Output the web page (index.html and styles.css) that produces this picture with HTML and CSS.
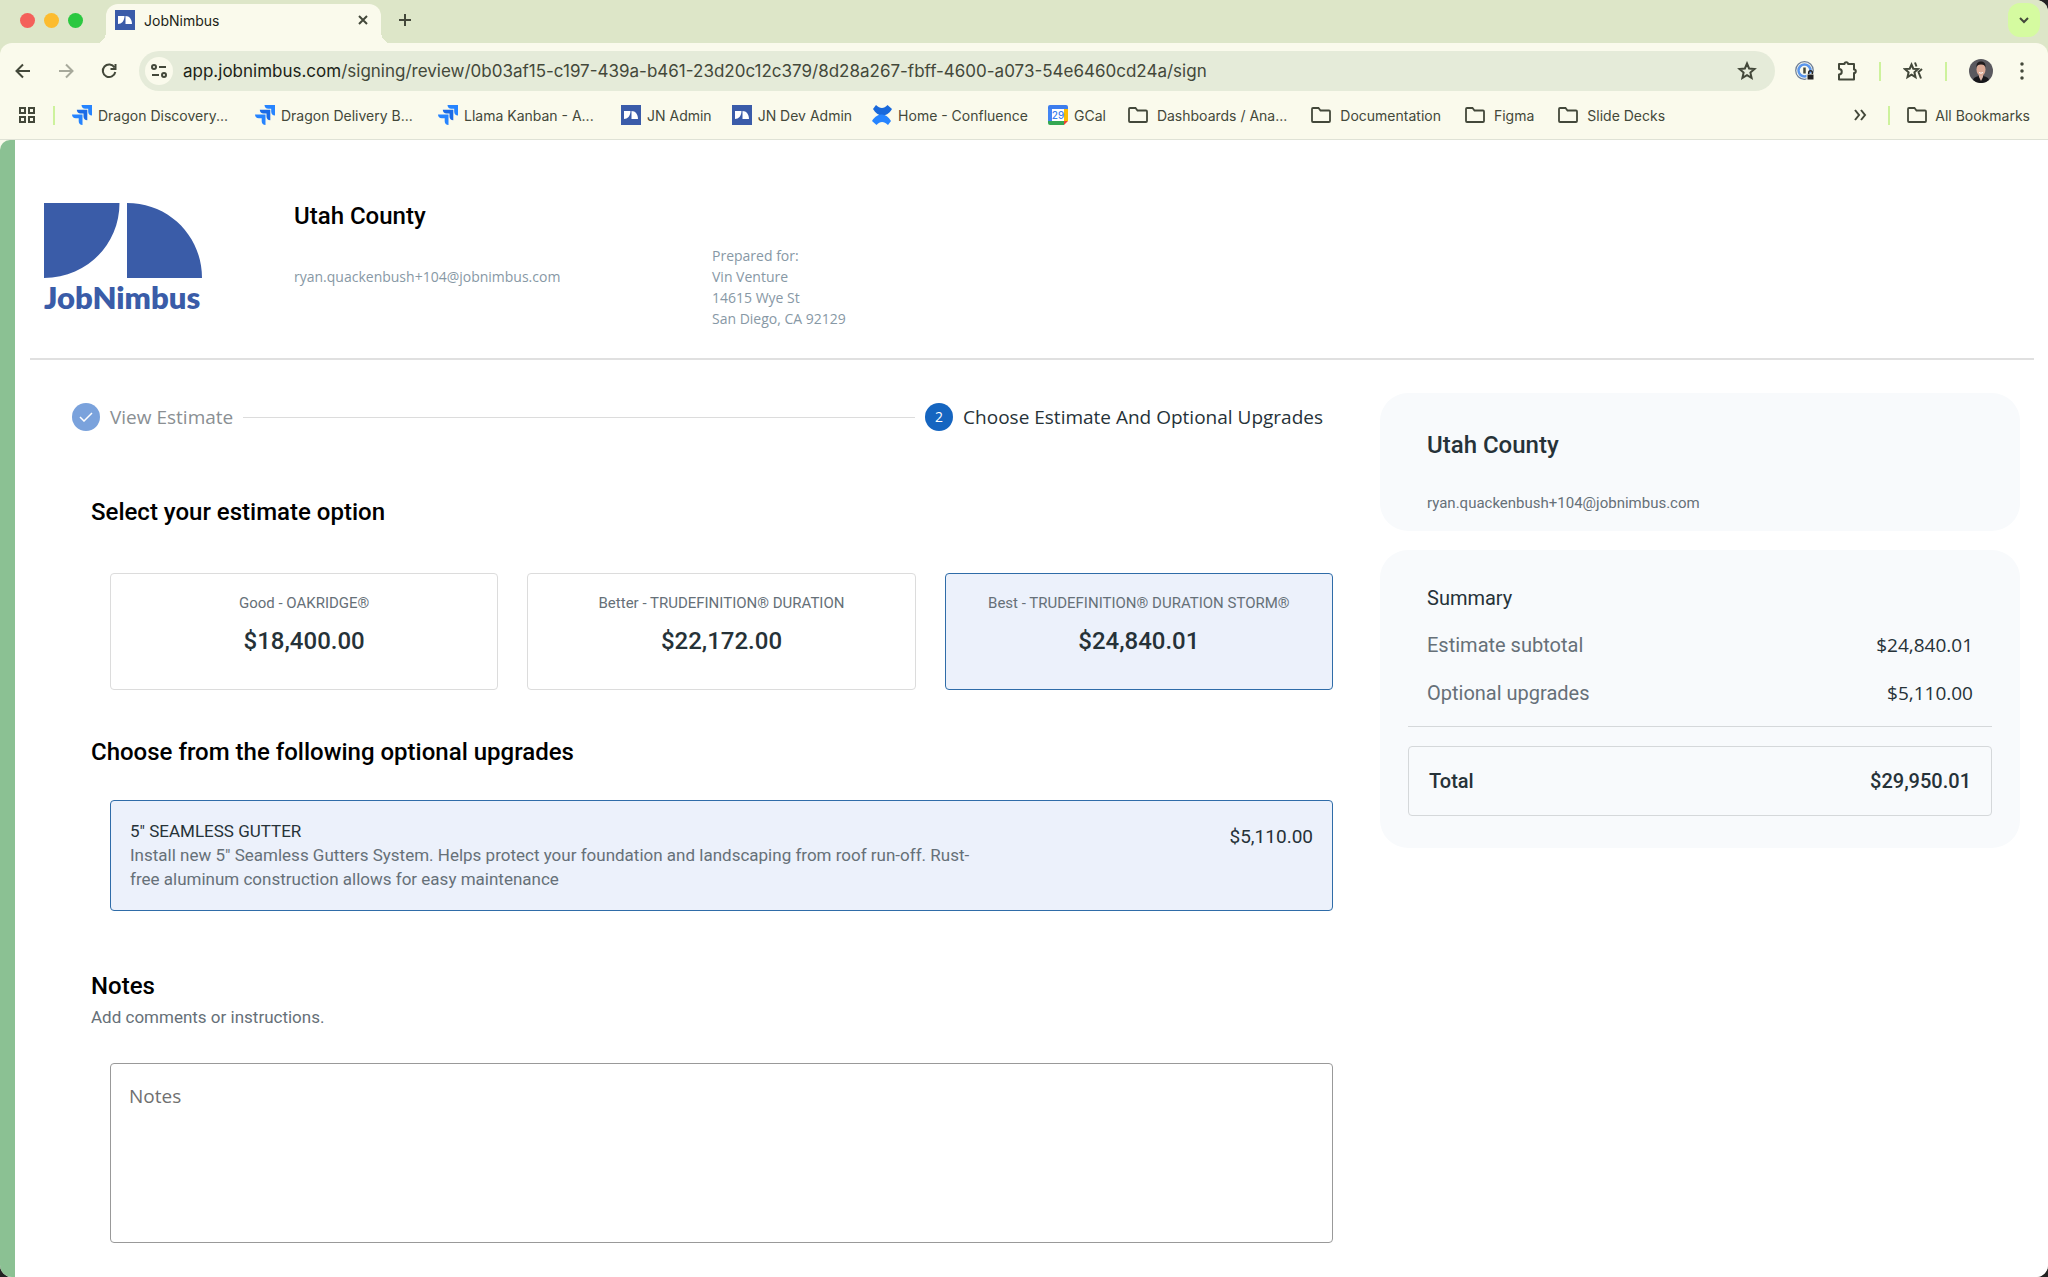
FILE: index.html
```html
<!DOCTYPE html>
<html lang="en">

<head>
    <meta charset="UTF-8">
    <title>JobNimbus</title>
    <link rel="stylesheet" href="styles.css">
</head>

<body>
    <!-- shared icons -->
    <svg class="sprite" aria-hidden="true">
        <symbol id="jn" viewBox="0 0 20 20">
            <rect width="20" height="20" fill="#3a5ba9" />
            <path d="M3 6h6.500c0 5-3 8-6.500 8zM10.500 6c4 0 6.500 3.500 6.500 8h-6.500z" fill="#fff" />
        </symbol>
        <symbol id="jira" viewBox="0 0 20 20">
            <path d="M9.500 0H20v10.500c-2.300 0-3.800-1.500-3.800-3.800V3.800h-2.900C11 3.800 9.500 2.300 9.500 0z" fill="#2684ff" />
            <path d="M4.800 4.700h10.500v10.500c-2.300 0-3.800-1.500-3.800-3.800V8.500H8.600c-2.300 0-3.800-1.500-3.800-3.800z" fill="#1b6be6" />
            <path d="M0 9.500h10.500V20c-2.300 0-3.800-1.500-3.800-3.800v-2.900H3.800C1.500 13.300 0 11.800 0 9.500z" fill="#2684ff" />
        </symbol>
        <symbol id="folder" viewBox="0 0 20 20">
            <path d="M2 3h5.500l2 2.500H18a1 1 0 0 1 1 1V16a1 1 0 0 1-1 1H2a1 1 0 0 1-1-1V4a1 1 0 0 1 1-1z" fill="none" stroke="#43483a" stroke-width="1.800" />
        </symbol>
    </svg>

    <div class="window">
        <header class="browser">
            <div class="tab-strip">
                <div class="lights"><i class="red"></i><i class="yellow"></i><i class="green"></i></div>
                <div class="tab">
                    <svg class="icon"><use href="#jn" /></svg>
                    <span>JobNimbus</span>
                    <button class="tab-close" aria-label="Close tab"><svg width="10" height="10" viewBox="0 0 10 10"><path d="M1 1l8 8M9 1l-8 8" /></svg></button>
                </div>
                <button class="new-tab" aria-label="New tab"><svg width="14" height="14" viewBox="0 0 14 14"><path d="M7 1v12M1 7h12" /></svg></button>
                <button class="tab-search" aria-label="Search tabs"><svg width="12" height="8" viewBox="0 0 12 8"><path d="M2 2l4 4 4-4" /></svg></button>
            </div>

            <div class="toolbar">
                <div class="nav">
                    <button aria-label="Back"><svg width="16" height="16" viewBox="0 0 16 16"><path d="M15 8H2M8 1.500L1.500 8 8 14.500" /></svg></button>
                    <button class="off" aria-label="Forward"><svg width="16" height="16" viewBox="0 0 16 16"><path d="M1 8h13M8 1.500L14.500 8 8 14.500" /></svg></button>
                    <button aria-label="Reload"><svg width="16" height="16" viewBox="0 0 16 16"><path d="M13.500 4.500A6.300 6.300 0 1 0 14.300 9M14.500 1v5h-5" /></svg></button>
                </div>
                <div class="omnibox">
                    <button class="site-info" aria-label="Site information"><svg width="16" height="14" viewBox="0 0 16 14"><circle cx="3" cy="3" r="2" /><path d="M8 3h7M1 11h7" /><circle cx="13" cy="11" r="2" /></svg></button>
                    <span class="url">app.jobnimbus.com<span>/signing/review/0b03af15-c197-439a-b461-23d20c12c379/8d28a267-fbff-4600-a073-54e6460cd24a/sign</span></span>
                    <button aria-label="Bookmark"><svg width="20" height="20" viewBox="0 0 20 20"><path d="M10 2.500l2.100 5 5.400.5-4.100 3.600 1.200 5.300-4.600-2.800-4.600 2.800 1.200-5.300L2.500 8l5.400-.5z" /></svg></button>
                </div>
                <div class="tools">
                    <button aria-label="Password manager"><svg width="20" height="20" viewBox="0 0 20 20"><circle cx="9.500" cy="9.500" r="8.800" stroke="#6d7d95" stroke-width="1.200" /><circle cx="9.500" cy="9.500" r="6" stroke="#5a96ec" stroke-width="2.500" /><path d="M9.500 6.500v6" stroke-width="2.500" /><path d="M12 13h7v6h-7z" fill="#222" stroke="#fafaec" stroke-width="1" /><path d="M13.700 13v-1.500a1.800 1.800 0 0 1 3.600 0V13" stroke="#222" stroke-width="1.500" /></svg></button>
                    <button aria-label="Extensions"><svg width="20" height="20" viewBox="0 0 20 20"><path d="M2 3h5.500a1.800 1.800 0 0 1 3.600 0H17v5.500a1.800 1.800 0 0 1 0 3.600V18.500H2V13.500a2.700 2.700 0 0 0 0-5.500z" stroke-linejoin="round" /></svg></button>
                    <i class="sep"></i>
                    <button aria-label="Labs"><svg width="20" height="20" viewBox="0 0 20 20"><path d="M8.500 3.500l1.800 4.200 4.700.4-3.600 3.200 1.100 4.800-4-2.500-4 2.500 1.100-4.800L2 8.100l4.700-.4zM12 1.500l1.500 4M19 8l-3.500 3 2.500 6.500" /></svg></button>
                    <i class="sep"></i>
                    <button aria-label="Profile"><svg width="24" height="24" viewBox="0 0 24 24"><circle cx="12" cy="12" r="12" fill="#5a595f" stroke="none" /><path d="M4 21c1-3 4-4 8-4s7 1 8 4a12 12 0 0 1-16 0z" fill="#17171b" stroke="none" /><path d="M10 15h4v3l-2 4-2-4z" fill="#d9b3a5" stroke="none" /><ellipse cx="12" cy="10.500" rx="4.500" ry="6.500" fill="#dba995" stroke="none" /><path d="M7.500 8.500C7 4 9.500 2.500 12 2.500s5 1.500 4.500 6C16 6.500 15 5.500 12 5.500s-4 1-4.500 3z" fill="#201b1d" stroke="none" /><path d="M10 13.500q2 1.500 4 0" stroke="#fff" stroke-width="1" /></svg></button>
                    <button class="menu" aria-label="Menu"><svg width="6" height="18" viewBox="0 0 6 18"><path d="M3 2v.1M3 9v.1M3 16v.1" stroke-width="3.500" stroke-linecap="round" /></svg></button>
                </div>
            </div>

            <nav class="bookmarks">
                <a href="#" aria-label="Apps"><svg width="18" height="18" viewBox="0 0 18 18" fill="none" stroke="#43483a" stroke-width="2"><path d="M2 2h5v5H2zM11 2h5v5h-5zM2 11h5v5H2zM11 11h5v5h-5z" /></svg></a>
                <i class="sep"></i>
                <a href="#" class="cut"><svg class="icon"><use href="#jira" /></svg>Dragon Discovery...</a>
                <a href="#" class="cut"><svg class="icon"><use href="#jira" /></svg>Dragon Delivery B...</a>
                <a href="#" class="cut"><svg class="icon"><use href="#jira" /></svg>Llama Kanban - A...</a>
                <a href="#"><svg class="icon"><use href="#jn" /></svg>JN Admin</a>
                <a href="#"><svg class="icon"><use href="#jn" /></svg>JN Dev Admin</a>
                <a href="#"><svg class="icon" viewBox="0 0 20 20"><path d="M1 4l3-4c4 4 8 4 11.500 0L20 4c-3 5-6.500 6.500-10 6.500S3.500 8 1 4z" fill="#1868db" /><path d="M19 16l-3 4c-4-4-8-4-11.500 0L0 16c3-5 6.500-6.500 10-6.500s6.500 2.500 9 6.500z" fill="#2684ff" /></svg>Home - Confluence</a>
                <a href="#"><svg class="icon" viewBox="0 0 20 20"><path d="M0 2a2 2 0 0 1 2-2h16a2 2 0 0 1 2 2v2H0z" fill="#3c7ded" /><path d="M0 4h4v12H0z" fill="#4285f4" /><path d="M16 4h4v12h-4z" fill="#fbbc04" /><path d="M0 16h16v4H2a2 2 0 0 1-2-2z" fill="#34a853" /><path d="M16 16h4l-4 4z" fill="#ea4335" /><path d="M4 4h12v12H4z" fill="#fff" /><text x="10" y="14" text-anchor="middle" class="cal-day">29</text></svg>GCal</a>
                <a href="#" class="folder cut"><svg class="icon"><use href="#folder" /></svg>Dashboards / Ana...</a>
                <a href="#" class="folder"><svg class="icon"><use href="#folder" /></svg>Documentation</a>
                <a href="#" class="folder"><svg class="icon"><use href="#folder" /></svg>Figma</a>
                <a href="#" class="folder"><svg class="icon"><use href="#folder" /></svg>Slide Decks</a>
                <button class="more" aria-label="More bookmarks"><svg width="14" height="12" viewBox="0 0 14 12"><path d="M2 1l4 5-4 5M8 1l4 5-4 5" /></svg></button>
                <i class="sep"></i>
                <a href="#" class="all"><svg class="icon"><use href="#folder" /></svg>All Bookmarks</a>
            </nav>
        </header>

        <div class="page">
            <section class="company">
                <div class="logo">
                    <svg viewBox="0 0 158 75" aria-hidden="true"><path d="M0 0h75.500C75.500 42 42 75 0 75zM83 0c42 0 75 33 75 75H83z" fill="#3a5ca8" /></svg>
                    <span>JobNimbus</span>
                </div>
                <div class="company-info">
                    <h1>Utah County</h1>
                    <p>ryan.quackenbush+104@jobnimbus.com</p>
                </div>
                <address>
                    Prepared for:<br>
                    Vin Venture<br>
                    14615 Wye St<br>
                    San Diego, CA 92129
                </address>
            </section>

            <div class="columns">
                <main>
                    <ol class="stepper">
                        <li class="done">
                            <span class="dot"><svg width="14" height="10" viewBox="0 0 14 10"><path d="M1 5l4 4 8-8" fill="none" stroke="#fff" stroke-width="1.500" /></svg></span>
                            View Estimate
                        </li>
                        <li class="line"></li>
                        <li><span class="dot">2</span>Choose Estimate And Optional Upgrades</li>
                    </ol>

                    <h2>Select your estimate option</h2>
                    <div class="options">
                        <button class="option"><span>Good - OAKRIDGE®</span><strong>$18,400.00</strong></button>
                        <button class="option"><span>Better - TRUDEFINITION® DURATION</span><strong>$22,172.00</strong></button>
                        <button class="option selected"><span>Best - TRUDEFINITION® DURATION STORM®</span><strong>$24,840.01</strong></button>
                    </div>

                    <h2>Choose from the following optional upgrades</h2>
                    <button class="upgrade selected">
                        <span class="upgrade-text">
                            <span class="upgrade-name">5" SEAMLESS GUTTER</span>
                            <span class="upgrade-desc">Install new 5" Seamless Gutters System. Helps protect your foundation and landscaping from roof run-off. Rust-free aluminum construction allows for easy maintenance</span>
                        </span>
                        <span class="upgrade-price">$5,110.00</span>
                    </button>

                    <h2><label for="notes">Notes</label></h2>
                    <p class="hint">Add comments or instructions.</p>
                    <textarea id="notes" placeholder="Notes"></textarea>
                </main>

                <aside>
                    <section class="card contact">
                        <h2>Utah County</h2>
                        <p>ryan.quackenbush+104@jobnimbus.com</p>
                    </section>
                    <section class="card summary">
                        <h3>Summary</h3>
                        <dl>
                            <div><dt>Estimate subtotal</dt><dd>$24,840.01</dd></div>
                            <div><dt>Optional upgrades</dt><dd>$5,110.00</dd></div>
                            <div class="total"><dt>Total</dt><dd>$29,950.01</dd></div>
                        </dl>
                    </section>
                </aside>
            </div>
        </div>
    </div>
</body>

</html>
```
FILE: styles.css
```css
* {
    box-sizing: border-box;
}

body {
    margin: 0;
    background: #222;
    font-family: Roboto, sans-serif;
    color: #263238;
}

h1,
h2,
h3,
p,
dl,
dd,
ol {
    margin: 0;
    padding: 0;
}

button {
    font: inherit;
    color: inherit;
    background: none;
    border: none;
    padding: 0;
    cursor: pointer;
}

.sprite {
    display: none;
}

.window {
    min-height: 100vh;
    display: flex;
    flex-direction: column;
    border-radius: 0 12px 12px 12px;
    overflow: hidden;
    background: #fafaec;
}

/* browser bars */
.browser {
    font-family: Inter, sans-serif;
    background: #dde6c8;
    border-bottom: 1px solid #dfe2d6;
}

.browser svg {
    display: block;
}

.browser button svg {
    fill: none;
    stroke: #43483a;
    stroke-width: 2;
}

.icon {
    width: 20px;
    height: 20px;
    flex: none;
}

.tab-strip {
    display: flex;
    align-items: center;
    height: 43px;
    padding: 0 8px 3px 20px;
}

.lights {
    display: flex;
    gap: 9px;
    width: 86px;
}

.lights i {
    width: 15px;
    height: 15px;
    border-radius: 50%;
}

.lights .red {
    background: #f4605a;
}

.lights .yellow {
    background: #fcbc2f;
}

.lights .green {
    background: #2bc840;
}

.tab {
    position: relative;
    display: flex;
    align-items: center;
    align-self: flex-end;
    gap: 9px;
    width: 275px;
    height: 40px;
    margin-bottom: -4px;
    padding: 0 13px 8px 9px;
    border-radius: 12px 12px 0 0;
    background: #fafaec;
    font-size: 14px;
    color: #1c1f17;
}

/* curved feet of the active tab */
.tab::before,
.tab::after {
    content: "";
    position: absolute;
    bottom: 0;
    width: 12px;
    height: 12px;
}

.tab::before {
    right: 100%;
    background: radial-gradient(circle at 0 0, transparent 12px, #fafaec 12px);
}

.tab::after {
    left: 100%;
    background: radial-gradient(circle at 100% 0, transparent 12px, #fafaec 12px);
}

.tab-close {
    margin-left: auto;
}

.new-tab {
    margin-left: 17px;
}

.tab-search {
    display: grid;
    place-items: center;
    width: 32px;
    height: 34px;
    margin-left: auto;
    border-radius: 12px;
    background: #d5fba0;
}

.toolbar {
    display: flex;
    align-items: center;
    gap: 20px;
    height: 56px;
    padding: 0 23px 0 15px;
    border-radius: 12px 12px 0 0;
    background: #fafaec;
}

.nav {
    display: flex;
    gap: 27px;
    width: 104px;
}

.nav .off {
    opacity: 0.45;
}

.omnibox {
    display: flex;
    align-items: center;
    flex: 1;
    gap: 10px;
    height: 40px;
    padding: 0 18px 0 6px;
    border-radius: 20px;
    background: #e5ebd9;
}

.site-info {
    display: grid;
    place-items: center;
    width: 28px;
    height: 28px;
    border-radius: 50%;
    background: #fafaec;
}

.url {
    flex: 1;
    font-size: 17px;
    color: #1c1f17;
}

.url span {
    color: #43483a;
}

.tools {
    display: flex;
    align-items: center;
    gap: 22px;
}

.tools .menu {
    margin-left: 4px;
}

.sep {
    width: 2px;
    height: 19px;
    background: #cdf29c;
}

.bookmarks {
    display: flex;
    align-items: center;
    gap: 20px;
    height: 40px;
    padding: 0 18px 8px;
    background: #fafaec;
    font-size: 14px;
}

.bookmarks .sep {
    margin: 0 -3px;
}

.bookmarks a {
    display: flex;
    align-items: center;
    gap: 6px;
    color: #43483a;
    text-decoration: none;
    white-space: nowrap;
}

.bookmarks .cut {
    min-width: 163px;
}

.bookmarks .folder {
    gap: 9px;
    padding: 0 2px;
}

.bookmarks .all {
    gap: 8px;
}

.bookmarks .more {
    margin: 0 4px 0 auto;
}

.cal-day {
    font-size: 10px;
    font-weight: 500;
    fill: #3c7ded;
}

/* page */
.page {
    flex: 1;
    padding: 0 14px 32px 15px;
    border-left: 15px solid #8bc193;
    border-top-left-radius: 10px;
    background: #fff;
}

.company {
    display: flex;
    padding: 63px 14px 29px;
    border-bottom: 2px solid #e0e0e0;
}

.logo {
    width: 158px;
    margin-right: 92px;
}

.logo svg {
    display: block;
    width: 100%;
}

.logo span {
    display: block;
    font: 800 31px/38px Lato, sans-serif;
    color: #3a5ca8;
}

.company-info {
    width: 418px;
}

h1,
h2 {
    font-size: 24px;
    font-weight: 500;
    line-height: 28px;
    color: #000;
}

h1 {
    line-height: 26px;
}

.company p,
address {
    font: 14px/21px "Open Sans", sans-serif;
    color: #8798a5;
}

.company p {
    margin-top: 37px;
}

address {
    margin-top: 42px;
}

.columns {
    display: grid;
    grid-template-columns: 2fr 1fr;
}

main {
    padding: 43px 33px 0 61px;
}

.stepper {
    display: flex;
    align-items: center;
    gap: 10px;
    margin: 0 10px 67px -19px;
    list-style: none;
    font: 19px/28px "Open Sans", sans-serif;
}

.stepper li {
    display: flex;
    align-items: center;
    gap: 10px;
}

.stepper .line {
    flex: 1;
    height: 1px;
    background: #dcdcdc;
}

.dot {
    display: grid;
    place-items: center;
    width: 28px;
    height: 28px;
    border-radius: 50%;
    background: #1565c0;
    color: #fff;
    font-size: 14px;
}

.done {
    color: #8a8f93;
}

.done .dot {
    background: #7aa2dc;
}

.options {
    display: grid;
    grid-template-columns: repeat(3, 1fr);
    gap: 29px;
    margin: 47px 0 48px 19px;
}

.option {
    display: flex;
    flex-direction: column;
    align-items: center;
    gap: 12px;
    padding: 19px 16px 32px;
    border: 1px solid #dcdcdc;
    border-radius: 4px;
    font-size: 15px;
    line-height: 20px;
    color: #667078;
}

.option strong {
    font-size: 24px;
    font-weight: 500;
    line-height: 32px;
    color: #263238;
}

.option.selected,
.upgrade.selected {
    border-color: #2f6ca8;
    background: #ecf1fb;
}

.upgrade {
    display: flex;
    justify-content: space-between;
    width: calc(100% - 19px);
    margin: 34px 0 61px 19px;
    padding: 18px 19px 19px;
    border: 1px solid;
    border-radius: 4px;
    text-align: left;
    font-size: 17px;
    line-height: 24px;
}

.upgrade-text {
    width: 72%;
}

.upgrade-name,
.upgrade-desc {
    display: block;
}

.upgrade-desc,
.hint {
    color: #667078;
}

.upgrade-price {
    margin-top: 6px;
    font-size: 19px;
}

.hint {
    margin-top: 5px;
    font-size: 17px;
    line-height: 24px;
}

textarea {
    display: block;
    width: calc(100% - 19px);
    height: 180px;
    margin: 34px 0 0 19px;
    padding: 18px;
    border: 1px solid #999;
    border-radius: 4px;
    resize: none;
    font: 19px/28px "Open Sans", sans-serif;
}

textarea::placeholder {
    color: #707070;
}

/* right column */
aside {
    display: flex;
    flex-direction: column;
    gap: 19px;
    padding: 33px 14px 0;
}

.card {
    padding: 37px 28px;
    border-radius: 28px;
    background: #f8fafc;
}

.contact {
    padding: 38px 47px 17px;
}

.contact h2 {
    color: #263238;
}

.contact p {
    margin-top: 34px;
    font-size: 15px;
    line-height: 21px;
    color: #667078;
}

.summary {
    padding-bottom: 32px;
}

.summary h3 {
    padding: 0 19px;
    font-size: 20px;
    font-weight: 400;
    line-height: 22px;
}

.summary dl {
    margin-top: 12px;
}

.summary dl div {
    display: flex;
    justify-content: space-between;
    padding: 12px 19px;
    font-size: 20px;
    line-height: 24px;
}

.summary dt {
    color: #667078;
}

.summary dd {
    font-family: "Open Sans", sans-serif;
    font-size: 19px;
}

.summary div:nth-child(2) {
    padding-bottom: 21px;
    border-bottom: 1px solid #d5d8da;
}

.summary .total {
    margin-top: 19px;
    padding: 22px 20px;
    border: 1px solid #d5d8da;
    border-radius: 4px;
    font-weight: 500;
}

.summary .total dt {
    color: #263238;
}

.summary .total dd {
    font-family: Roboto, sans-serif;
    font-size: 20px;
}
```
